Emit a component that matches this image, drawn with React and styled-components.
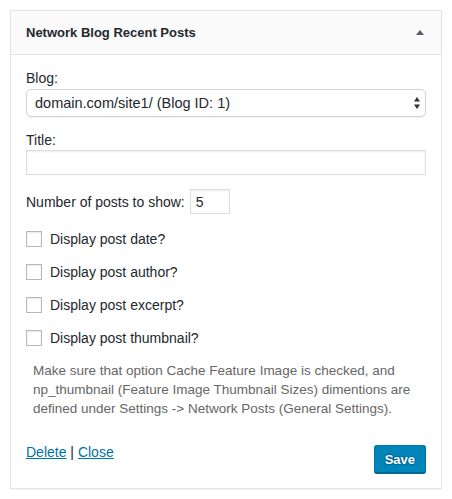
import React from "react";
import styled, { createGlobalStyle } from "styled-components";

const GlobalStyle = createGlobalStyle`
  html, body { margin: 0; padding: 0; background: #fff; }
  body {
    font-family: "Liberation Sans", Arial, sans-serif;
    color: #23282d;
    -webkit-font-smoothing: antialiased;
  }
  * { box-sizing: border-box; }
`;

const Page = styled.div`
  padding: 10px;
`;

const Widget = styled.div`
  border: 1px solid #e5e5e5;
  box-shadow: 0 1px 1px rgba(0, 0, 0, 0.04);
  background: #fff;
`;

const Header = styled.div`
  height: 44px;
  display: flex;
  align-items: center;
  justify-content: space-between;
  padding: 0 15px;
  background: #fafafa;
  border-bottom: 1px solid #e5e5e5;
`;

const HeaderTitle = styled.h3`
  margin: 0;
  font-size: 13px;
  font-weight: 700;
  line-height: 1;
  color: #23282d;
`;

const Toggle = styled.svg`
  display: block;
  margin-right: 2px;
`;

const Body = styled.div`
  padding: 14px 15px 15px;
`;

const Field = styled.div`
  margin-bottom: ${(p) => p.$mb ?? 14}px;
`;

const Label = styled.label`
  display: block;
  font-size: 14px;
  line-height: 18px;
  color: #23282d;
`;

const SelectWrap = styled.div`
  position: relative;
  margin-top: 2px;
`;

const Select = styled.select`
  appearance: none;
  -webkit-appearance: none;
  display: block;
  width: 100%;
  height: 28px;
  margin: 0;
  padding: 0 24px 0 8px;
  font-family: "Liberation Sans", Arial, sans-serif;
  font-size: 14.5px;
  color: #23282d;
  background: #fff;
  border: 1px solid #d4d4d4;
  border-radius: 5px;
  box-shadow: 0 1px 1px rgba(0, 0, 0, 0.06);
  outline: none;
`;

const SelectArrows = styled.svg`
  position: absolute;
  right: 6px;
  top: 8px;
  pointer-events: none;
`;

const TextInput = styled.input`
  display: block;
  width: ${(p) => p.$w || "100%"};
  height: 25px;
  margin: ${(p) => (p.$inline ? "0" : "1px 0 0")};
  padding: 0 5px;
  font-family: "Liberation Sans", Arial, sans-serif;
  font-size: 14px;
  color: #23282d;
  background: #fff;
  border: 1px solid #ddd;
  border-radius: 0;
  box-shadow: inset 0 1px 2px rgba(0, 0, 0, 0.07);
  outline: none;
`;

const InlineRow = styled.div`
  display: flex;
  align-items: center;
  gap: 5px;
  margin-bottom: 17px;
`;

const InlineLabel = styled.label`
  font-size: 14px;
  line-height: 18px;
  color: #23282d;
`;

const Checks = styled.div`
  display: flex;
  flex-direction: column;
  gap: 17px;
`;

const CheckRow = styled.label`
  display: flex;
  align-items: center;
  height: 16px;
  gap: 8px;
  font-size: 14px;
  line-height: 18px;
  color: #23282d;
`;

const Box = styled.span`
  display: block;
  width: 16px;
  height: 16px;
  flex: none;
  border: 1px solid #b4b9be;
  background: #fff;
  box-shadow: inset 0 1px 2px rgba(0, 0, 0, 0.1);
`;

const Note = styled.p`
  margin: 15px 0 25px 7px;
  font-size: 13.5px;
  line-height: 19px;
  color: #666;
`;

const Actions = styled.div`
  display: flex;
  align-items: flex-start;
  justify-content: space-between;
`;

const Links = styled.div`
  font-size: 14px;
  line-height: 18px;
  color: #23282d;
`;

const Link = styled.a`
  color: #0073aa;
  text-decoration: underline;
`;

const SaveButton = styled.button`
  margin-top: 2px;
  height: 28px;
  padding: 0 10px;
  font-family: "Liberation Sans", Arial, sans-serif;
  font-size: 13px;
  font-weight: 700;
  color: #fff;
  background: #0085ba;
  border: 1px solid #0073aa;
  border-bottom-color: #006799;
  border-radius: 3px;
  box-shadow: 0 1px 0 #006799;
  text-shadow: 0 -1px 1px #006799, 1px 0 1px #006799, 0 1px 1px #006799, -1px 0 1px #006799;
  cursor: pointer;
`;

const options = ["Display post date?", "Display post author?", "Display post excerpt?", "Display post thumbnail?"];

export default function App() {
  return (
    <>
      <GlobalStyle />
      <Page>
        <Widget>
          <Header>
            <HeaderTitle>Network Blog Recent Posts</HeaderTitle>
            <Toggle width="8" height="5" viewBox="0 0 8 5">
              <polygon points="4,0 8,5 0,5" fill="#555d66" />
            </Toggle>
          </Header>
          <Body>
            <Field>
              <Label>Blog:</Label>
              <SelectWrap>
                <Select defaultValue="1">
                  <option value="1">domain.com/site1/ (Blog ID: 1)</option>
                </Select>
                <SelectArrows width="6" height="12" viewBox="0 0 6 12">
                  <polygon points="3,0 6,4.5 0,4.5" fill="#333" />
                  <polygon points="0,7.5 6,7.5 3,12" fill="#333" />
                </SelectArrows>
              </SelectWrap>
            </Field>
            <Field>
              <Label>Title:</Label>
              <TextInput type="text" defaultValue="" />
            </Field>
            <InlineRow>
              <InlineLabel>Number of posts to show:</InlineLabel>
              <TextInput $inline $w="40px" type="text" defaultValue="5" />
            </InlineRow>
            <Checks>
              {options.map((o) => (
                <CheckRow key={o}>
                  <Box />
                  {o}
                </CheckRow>
              ))}
            </Checks>
            <Note>
              Make sure that option Cache Feature Image is checked, and
              <br />
              np_thumbnail (Feature Image Thumbnail Sizes) dimentions are
              <br />
              defined under Settings -&gt; Network Posts (General Settings).
            </Note>
            <Actions>
              <Links>
                <Link href="#">Delete</Link> | <Link href="#">Close</Link>
              </Links>
              <SaveButton type="button">Save</SaveButton>
            </Actions>
          </Body>
        </Widget>
      </Page>
    </>
  );
}
